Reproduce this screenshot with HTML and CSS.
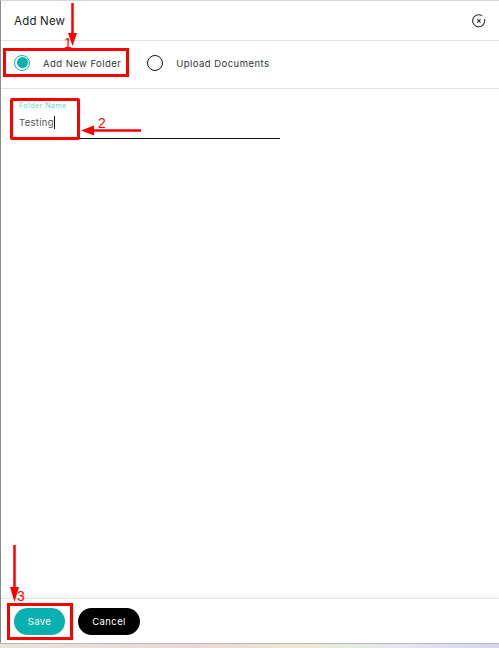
FILE: index.html
```html
<html>
  <head>
    <link rel="stylesheet" href="styles.css">
  </head>
  <body>
    <div class="modal">
      <div class="modal-header">
        <h3>Add New</h3>
        <svg class="close-icon" width="14" height="14" viewBox="0 0 14 14">
          <path d="M10.2 1.9A6 6 0 1 0 12.4 5" fill="none" stroke="#333" stroke-width="1.1" />
          <path d="M5.2 5.2l3.4 3.4M8.6 5.2L5.2 8.6" fill="none" stroke="#333" stroke-width="1.1" />
        </svg>
      </div>

      <div class="type-row">
        <label class="radio-item radio-first">
          <span class="radio checked"><span class="radio-dot"></span></span>
          <span class="radio-text">Add New Folder</span>
        </label>
        <label class="radio-item">
          <span class="radio"></span>
          <span class="radio-text">Upload Documents</span>
        </label>
      </div>

      <div class="modal-body">
        <div class="field">
          <label class="field-label">Folder Name</label>
          <div class="field-value">Testing<span class="caret"></span></div>
        </div>
      </div>

      <div class="modal-footer">
        <button class="btn btn-save">Save</button>
        <button class="btn btn-cancel">Cancel</button>
      </div>
    </div>
    <div class="bottom-strip"></div>

    <!-- Annotations drawn on top of the screenshot -->
    <div class="mark mark-folder"></div>
    <div class="mark mark-name"></div>
    <div class="mark mark-save"></div>
    <svg class="arrows" width="499" height="648" viewBox="0 0 499 648">
      <path d="M72.5 3V36M14.500 545V590M141 130.500H92" fill="none" stroke="#f00" stroke-width="2.500" />
      <path d="M68 33H77L72.500 46ZM10 587H19L14.500 602ZM94 125.500V135.500L81 130.500Z" fill="#f00" />
    </svg>
    <span class="step step-1">1</span>
    <span class="step step-2">2</span>
    <span class="step step-3">3</span>
  </body>
</html>
```

FILE: styles.css
```css
body {
  margin: 0;
  width: 499px;
  height: 648px;
  overflow: hidden;
  position: relative;
  background-color: #fff;
  font-family: "Inter", "Open Sans", sans-serif;
  color: #333;
}

.modal {
  height: 643px;
  display: flex;
  flex-direction: column;
  border-top: 1px solid #d8d8d8;
  border-left: 1px solid #8a8a8a;
  box-sizing: border-box;
}

.modal-header {
  height: 39px;
  flex-shrink: 0;
  display: flex;
  align-items: center;
  justify-content: space-between;
  padding: 0 13px;
  border-bottom: 1px solid #e2e2e2;
}

.modal-header h3 {
  margin: 0;
  font-size: 11.500px;
  font-weight: 400;
  letter-spacing: 0.2px;
  color: #222;
}

.close-icon {
  display: block;
}

.type-row {
  height: 48px;
  flex-shrink: 0;
  display: flex;
  align-items: center;
  padding: 0 0 4px 13px;
  box-sizing: border-box;
  border-bottom: 1px solid #e2e2e2;
}

.radio-item {
  display: flex;
  align-items: center;
  gap: 13px;
  font-size: 9.500px;
  letter-spacing: 0.45px;
  color: #333;
}

.radio-first {
  margin-right: 26px;
}

.radio-text {
  padding-top: 2px;
}

.radio {
  width: 14px;
  height: 14px;
  border: 1.300px solid #111;
  border-radius: 50%;
  display: flex;
  align-items: center;
  justify-content: center;
}

.radio.checked {
  border-color: #0bb0b0;
}

.radio-dot {
  width: 11px;
  height: 11px;
  border-radius: 50%;
  background-color: #0bb0b0;
}

.modal-body {
  flex: 1;
  padding: 12px 0 0 18px;
}

.field {
  width: 261px;
  height: 37px;
  border-bottom: 1px solid #111;
}

.field-label {
  display: block;
  font-size: 7px;
  line-height: 9px;
  letter-spacing: 0.5px;
  color: #5fd3d3;
}

.field-value {
  margin-top: 6px;
  font-size: 9.500px;
  line-height: 14px;
  letter-spacing: 0.3px;
  color: #555;
}

.caret {
  display: inline-block;
  width: 1px;
  height: 13px;
  vertical-align: -3px;
  background-color: #111;
}

.modal-footer {
  height: 45px;
  flex-shrink: 0;
  display: flex;
  align-items: center;
  gap: 13px;
  padding: 1px 0 0 13px;
  box-sizing: border-box;
  border-top: 1px solid #e6e6e6;
  box-shadow: 0 -3px 4px rgba(0, 0, 0, 0.05);
}

.btn {
  height: 27px;
  border: 0;
  border-radius: 14px;
  font-family: inherit;
  font-size: 9.500px;
  letter-spacing: 0.4px;
  padding: 0;
  color: #fff;
}

.btn-save {
  width: 51px;
  background-color: #0bb0b0;
}

.btn-cancel {
  width: 62px;
  background-color: #000;
}

.bottom-strip {
  height: 5px;
  border-top: 1px solid #bdb9b4;
  box-sizing: border-box;
  background: linear-gradient(90deg, #e8e4dc, #ecd6d6 40%, #f0e8cc 60%, #e4ecdc 70%, #e4e4f6 82%, #d4d4f0);
}

.mark {
  position: absolute;
  border: 3px solid #f00;
  box-sizing: border-box;
}

.mark-folder {
  left: 3px;
  top: 48px;
  width: 126px;
  height: 29px;
}

.mark-name {
  left: 10px;
  top: 98px;
  width: 70px;
  height: 42px;
  border-radius: 2px;
}

.mark-save {
  left: 7px;
  top: 603px;
  width: 66px;
  height: 37px;
}

.arrows {
  position: absolute;
  left: 0;
  top: 0;
}

.step {
  position: absolute;
  font-family: "Liberation Sans", sans-serif;
  font-size: 14px;
  line-height: 15px;
  color: #f00;
}

.step-1 {
  left: 64px;
  top: 36px;
}

.step-2 {
  left: 98px;
  top: 116px;
}

.step-3 {
  left: 17px;
  top: 589px;
}
```
